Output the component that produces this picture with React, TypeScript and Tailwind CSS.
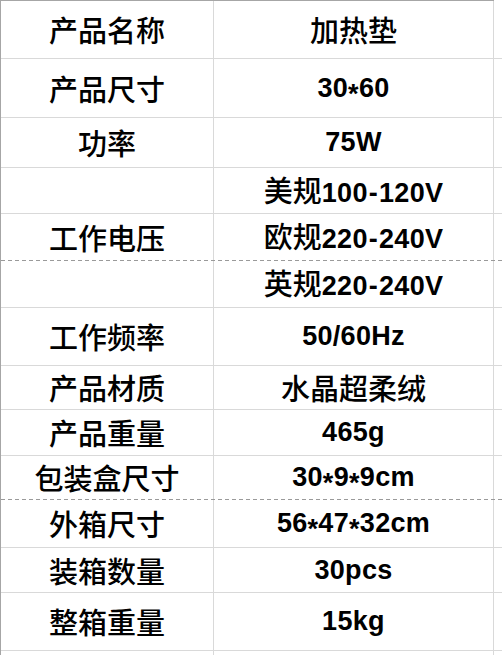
import React from "react";

type Row = { l: string; r: string; h: number; dashed?: boolean };

const rows: Row[] = [
  { l: "产品名称", r: "加热垫", h: 58 },
  { l: "产品尺寸", r: "30*60", h: 59 },
  { l: "功率", r: "75W", h: 50 },
  { l: "", r: "美规100-120V", h: 46 },
  { l: "工作电压", r: "欧规220-240V", h: 47, dashed: true },
  { l: "", r: "英规220-240V", h: 47 },
  { l: "工作频率", r: "50/60Hz", h: 58 },
  { l: "产品材质", r: "水晶超柔绒", h: 44 },
  { l: "产品重量", r: "465g", h: 46 },
  { l: "包装盒尺寸", r: "30*9*9cm", h: 44, dashed: true },
  { l: "外箱尺寸", r: "56*47*32cm", h: 48 },
  { l: "装箱数量", r: "30pcs", h: 45 },
  { l: "整箱重量", r: "15kg", h: 58 },
];

function Txt({ s }: { s: string }) {
  const parts = s.match(/[\u4e00-\u9fff]+|[^\u4e00-\u9fff]+/g) || [];
  return (
    <span className="whitespace-nowrap">
      {parts.map((p, i) =>
        /[\u4e00-\u9fff]/.test(p) ? (
          <span
            key={i}
            className="text-[29px] font-medium [font-family:'Noto_Sans_CJK_SC',sans-serif]"
          >
            {p}
          </span>
        ) : (
          <span
            key={i}
            className="text-[27px] tracking-[0.3px] font-bold [font-family:'Liberation_Sans',Arial,sans-serif]"
          >
            {p.split("").map((c, j) =>
              c === "*" ? (
                <span key={j} className="relative top-[6px]">
                  *
                </span>
              ) : c === "-" ? (
                <span key={j} className="px-[1px]">
                  -
                </span>
              ) : (
                <React.Fragment key={j}>{c}</React.Fragment>
              )
            )}
          </span>
        )
      )}
    </span>
  );
}

export default function App() {
  return (
    <div className="w-[502px] h-[655px] bg-white overflow-hidden text-black">
      <div className="h-px w-[494px] bg-[#a6a6a6]" />
      <div className="border-l border-[#a6a6a6]">
        {rows.map((row, i) => (
          <div key={i} className="flex flex-col" style={{ height: row.h }}>
            <div className="flex flex-1 min-h-0">
              <div className="w-[213px] border-r border-[#d9d9d9] flex items-center justify-center leading-none">
                <Txt s={row.l} />
              </div>
              <div className="w-[280px] border-r border-[#d9d9d9] flex items-center justify-center leading-none">
                <Txt s={row.r} />
              </div>
            </div>
            {row.dashed ? (
              <div className="h-px bg-[linear-gradient(to_right,#9a9a9a_4px,transparent_4px)] bg-[length:7px_1px]" />
            ) : (
              <div className="h-px bg-[#d9d9d9]" />
            )}
          </div>
        ))}
        <div className="flex h-[10px]">
          <div className="w-[213px] border-r border-[#d9d9d9]" />
          <div className="w-[280px] border-r border-[#d9d9d9]" />
        </div>
      </div>
    </div>
  );
}
